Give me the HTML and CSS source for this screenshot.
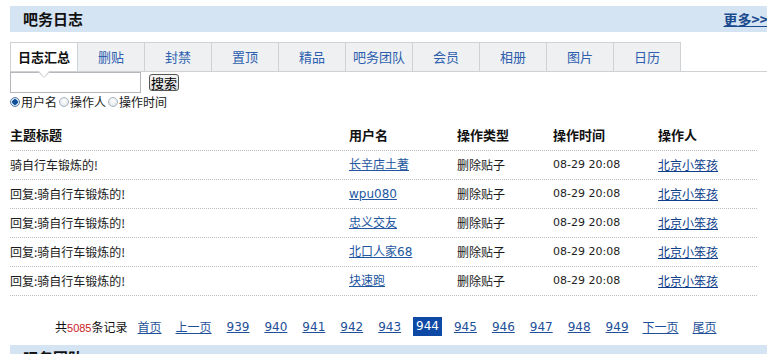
FILE: index.html
```html
<!DOCTYPE html>
<html lang="zh-CN">
<head>
<meta charset="utf-8">
<title>吧务日志</title>
<link rel="stylesheet" href="styles.css">
</head>
<body>
<div class="page">
  <div class="bar">
    <h2 class="bar-title">吧务日志</h2>
    <a class="more" href="#">更多&gt;&gt;</a>
  </div>

  <ul class="tabs">
    <li class="tab active">日志汇总</li>
    <li class="tab"><a href="#">删贴</a></li>
    <li class="tab"><a href="#">封禁</a></li>
    <li class="tab"><a href="#">置顶</a></li>
    <li class="tab"><a href="#">精品</a></li>
    <li class="tab"><a href="#">吧务团队</a></li>
    <li class="tab"><a href="#">会员</a></li>
    <li class="tab"><a href="#">相册</a></li>
    <li class="tab"><a href="#">图片</a></li>
    <li class="tab"><a href="#">日历</a></li>
  </ul>

  <form class="search">
    <div class="search-row">
      <input class="search-input" type="text">
      <button class="search-btn" type="button">搜索</button>
    </div>
    <div class="radios">
      <label class="radio"><input type="radio" name="t" checked>用户名</label>
      <label class="radio"><input type="radio" name="t">操作人</label>
      <label class="radio"><input type="radio" name="t">操作时间</label>
    </div>
  </form>

  <div class="log">
    <div class="row head">
      <span>主题标题</span><span>用户名</span><span>操作类型</span><span>操作时间</span><span>操作人</span>
    </div>
    <div class="row">
      <span>骑自行车锻炼的!</span><a class="user" href="#">长辛店土著</a><span>删除贴子</span><span class="time">08-29 20:08</span><a class="op" href="#">北京小笨孩</a>
    </div>
    <div class="row">
      <span>回复:骑自行车锻炼的!</span><a class="user" href="#">wpu080</a><span>删除贴子</span><span class="time">08-29 20:08</span><a class="op" href="#">北京小笨孩</a>
    </div>
    <div class="row">
      <span>回复:骑自行车锻炼的!</span><a class="user" href="#">忠义交友</a><span>删除贴子</span><span class="time">08-29 20:08</span><a class="op" href="#">北京小笨孩</a>
    </div>
    <div class="row">
      <span>回复:骑自行车锻炼的!</span><a class="user" href="#">北口人家68</a><span>删除贴子</span><span class="time">08-29 20:08</span><a class="op" href="#">北京小笨孩</a>
    </div>
    <div class="row">
      <span>回复:骑自行车锻炼的!</span><a class="user" href="#">块速跑</a><span>删除贴子</span><span class="time">08-29 20:08</span><a class="op" href="#">北京小笨孩</a>
    </div>
  </div>

  <div class="pager">
    <span class="total">共<em>5085</em>条记录</span>
    <a href="#">首页</a>
    <a href="#">上一页</a>
    <a class="num" href="#">939</a>
    <a class="num" href="#">940</a>
    <a class="num" href="#">941</a>
    <a class="num" href="#">942</a>
    <a class="num" href="#">943</a>
    <span class="num current">944</span>
    <a class="num" href="#">945</a>
    <a class="num" href="#">946</a>
    <a class="num" href="#">947</a>
    <a class="num" href="#">948</a>
    <a class="num" href="#">949</a>
    <a href="#">下一页</a>
    <a href="#">尾页</a>
  </div>

  <div class="bar bottom">
    <h2 class="bar-title">吧务团队</h2>
  </div>
</div>
</body>
</html>
```

FILE: styles.css
```css
html, body {
  margin: 0;
  padding: 0;
  background: #fff;
  overflow: hidden;
}

body {
  font-family: "DejaVu Sans", "Noto Sans CJK SC", sans-serif;
  font-size: 12px;
  color: #1a1a1a;
}

.page {
  padding: 6px 0 0 10px;
  width: 757px;
}

/* title bars */
.bar {
  height: 26px;
  background: #d4e4f3;
  display: flex;
  align-items: center;
  justify-content: space-between;
}

.bar-title {
  margin: 0;
  padding-left: 13px;
  font-family: "Noto Sans CJK SC", sans-serif;
  font-size: 15px;
  font-weight: bold;
  line-height: 26px;
  color: #111;
}

.more {
  font-family: "Noto Sans CJK SC", sans-serif;
  font-size: 14px;
  font-weight: bold;
  color: #1a4a8e;
  text-decoration: underline;
  line-height: 26px;
  margin-right: -1px;
}

/* tabs */
.tabs {
  list-style: none;
  margin: 10px 0 0 0;
  padding: 0;
  display: flex;
  border-bottom: 1px solid #cfd2d5;
}

.tab {
  position: relative;
  box-sizing: border-box;
  width: 67px;
  height: 29px;
  border-top: 1px solid #cfd2d5;
  border-left: 1px solid #cfd2d5;
  background: #eef0f2;
  text-align: center;
  line-height: 28px;
  font-family: "Noto Sans CJK SC", sans-serif;
  font-size: 13px;
}

.tab:last-child {
  border-right: 1px solid #cfd2d5;
  width: 68px;
}

.tab a {
  color: #2d5fae;
  text-decoration: none;
}

.tab.active {
  background: #fff;
  font-weight: bold;
  color: #111;
}

.tab.active::before,
.tab.active::after {
  content: "";
  position: absolute;
  left: 50%;
  width: 0;
  height: 0;
  border-style: solid;
  border-color: transparent;
  z-index: 2;
}

.tab.active::before {
  bottom: -7px;
  margin-left: -6px;
  border-width: 6px 6px 0 6px;
  border-top-color: #cfd2d5;
}

.tab.active::after {
  bottom: -6px;
  margin-left: -5px;
  border-width: 6px 5px 0 5px;
  border-top-color: #fff;
}

/* search */
.search {
  margin: 0;
}

.search-row {
  display: flex;
  align-items: flex-start;
}

.search-input {
  box-sizing: border-box;
  width: 131px;
  height: 21px;
  margin: 0;
  border: 1px solid #b4b8bd;
  padding: 0 3px;
}

.search-btn {
  margin: 2px 0 0 8px;
  height: 17px;
  padding: 0 1px;
  border: 1px solid #555;
  border-radius: 3px;
  background: linear-gradient(#f6f6f6, #dcdcdc);
  font-family: "Noto Sans CJK SC", sans-serif;
  font-size: 13px;
  line-height: 14px;
  color: #000;
}

.radios {
  display: flex;
  align-items: center;
  height: 15px;
  margin-top: 1px;
  font-family: "Noto Sans CJK SC", sans-serif;
  font-size: 12px;
  line-height: 15px;
}

.radio {
  display: flex;
  align-items: center;
}

.radio input {
  appearance: none;
  -webkit-appearance: none;
  box-sizing: border-box;
  width: 10px;
  height: 10px;
  margin: 0 1px 0 2px;
  border: 1px solid #a7b3bf;
  border-radius: 50%;
  background: radial-gradient(circle at 50% 40%, #fff, #d9dfe5);
}

.radio:first-child input {
  margin-left: 0;
}

.radio input:checked {
  border-color: #5a7fa6;
  background: radial-gradient(circle, #0d4f99 0 2.5px, #cfe0f0 3px);
}

/* table */
.log {
  margin-top: 11px;
  margin-right: 10px;
}

.row {
  display: grid;
  grid-template-columns: 339px 108px 96px 105px 1fr;
  align-items: center;
  height: 28px;
  border-bottom: 1px dotted #bdbdbd;
  font-family: "Noto Sans CJK SC", sans-serif;
  line-height: 16px;
}

.row.head {
  height: 30px;
  font-weight: bold;
  font-size: 13px;
  color: #111;
}

.row .user {
  color: #2356a0;
  text-decoration: underline;
  font-family: "DejaVu Sans", "Noto Sans CJK SC", sans-serif;
  font-size: 11px;
}

.row .user {
  font-size: 12px;
}

.row .time {
  font-family: "DejaVu Sans", sans-serif;
  font-size: 11px;
  color: #222;
}

.row .op {
  color: #0e3e8a;
  text-decoration: underline;
}

/* pager */
.pager {
  display: flex;
  align-items: center;
  gap: 14px;
  height: 19px;
  margin: 21px 0 0 45px;
  font-family: "Noto Sans CJK SC", sans-serif;
  font-size: 12px;
}

.pager a {
  color: #1e4f98;
  text-decoration: underline;
}

.pager .total {
  color: #111;
  margin-right: -4px;
}

.pager em {
  font-style: normal;
  color: #c8181e;
  font-family: "Liberation Sans", sans-serif;
  font-size: 11px;
}

.pager .num {
  font-family: "DejaVu Sans", sans-serif;
  font-size: 12px;
  margin-left: 1px;
}

.pager .current {
  background: #0e4aa5;
  color: #fff;
  height: 19px;
  line-height: 19px;
  padding: 0 3px;
  margin: 0 -3px 0 -2px;
}

.bar.bottom {
  margin-top: 9px;
}
```
